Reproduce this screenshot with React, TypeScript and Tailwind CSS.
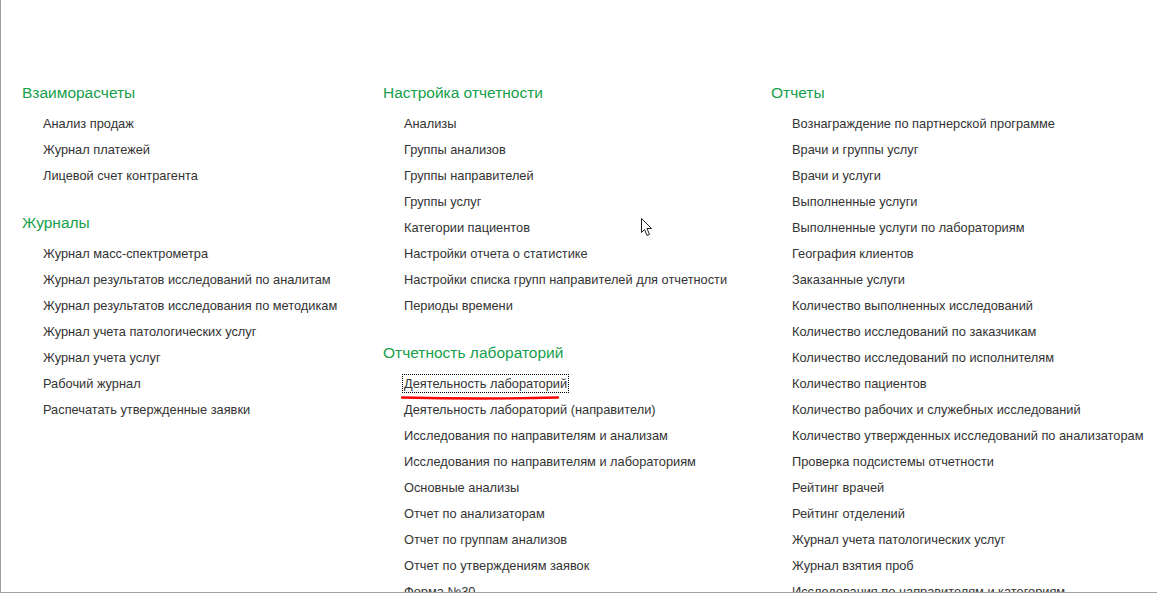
import React from "react";

type Section = { title: string; items: string[] };

const col1: Section[] = [
  { title: "Взаиморасчеты", items: ["Анализ продаж", "Журнал платежей", "Лицевой счет контрагента"] },
  {
    title: "Журналы",
    items: [
      "Журнал масс-спектрометра",
      "Журнал результатов исследований по аналитам",
      "Журнал результатов исследования по методикам",
      "Журнал учета патологических услуг",
      "Журнал учета услуг",
      "Рабочий журнал",
      "Распечатать утвержденные заявки",
    ],
  },
];

const col2: Section[] = [
  {
    title: "Настройка отчетности",
    items: [
      "Анализы",
      "Группы анализов",
      "Группы направителей",
      "Группы услуг",
      "Категории пациентов",
      "Настройки отчета о статистике",
      "Настройки списка групп направителей для отчетности",
      "Периоды времени",
    ],
  },
  {
    title: "Отчетность лабораторий",
    items: [
      "Деятельность лабораторий",
      "Деятельность лабораторий (направители)",
      "Исследования по направителям и анализам",
      "Исследования по направителям и лабораториям",
      "Основные анализы",
      "Отчет по анализаторам",
      "Отчет по группам анализов",
      "Отчет по утверждениям заявок",
      "Форма №30",
    ],
  },
];

const col3: Section[] = [
  {
    title: "Отчеты",
    items: [
      "Вознаграждение по партнерской программе",
      "Врачи и группы услуг",
      "Врачи и услуги",
      "Выполненные услуги",
      "Выполненные услуги по лабораториям",
      "География клиентов",
      "Заказанные услуги",
      "Количество выполненных исследований",
      "Количество исследований по заказчикам",
      "Количество исследований по исполнителям",
      "Количество пациентов",
      "Количество рабочих и служебных исследований",
      "Количество утвержденных исследований по анализаторам",
      "Проверка подсистемы отчетности",
      "Рейтинг врачей",
      "Рейтинг отделений",
      "Журнал учета патологических услуг",
      "Журнал взятия проб",
      "Исследования по направителям и категориям",
    ],
  },
];

function Column({ sections }: { sections: Section[] }) {
  return (
    <div className="flex flex-col gap-[24px]">
      {sections.map((s) => (
        <div key={s.title} className="flex flex-col">
          <div className="h-[20px] leading-[20px] text-[15.5px] text-[#16a04c] mb-[8px] whitespace-nowrap">{s.title}</div>
          <div className="flex flex-col pl-[21px]">
            {s.items.map((it) => (
              <div key={it} className="h-[26px] leading-[26px] text-[12.8px] text-[#333333] whitespace-nowrap">
                {it === "Деятельность лабораторий" && s.title === "Отчетность лабораторий" ? (
                  <span className="relative -ml-[2px] px-[1px] border border-dotted border-black leading-[17px] inline-block">
                    {it}
                    <svg className="absolute left-[-2px] top-[20px]" width="160" height="6" viewBox="0 0 160 6">
                      <path d="M1 2.5 C 40 3.5, 100 4, 157 2.5" stroke="#ff0000" strokeWidth="2.4" fill="none" strokeLinecap="round" />
                    </svg>
                  </span>
                ) : (
                  it
                )}
              </div>
            ))}
          </div>
        </div>
      ))}
    </div>
  );
}

export default function App() {
  return (
    <div
      className="relative w-[1157px] h-[593px] overflow-hidden bg-white border-l border-b border-[#a0a0a0]"
      style={{ fontFamily: '"Liberation Sans", Arial, sans-serif' }}
    >
      <div className="grid grid-cols-[361px_388px_1fr] pl-[21px] pt-[83px]">
        <Column sections={col1} />
        <Column sections={col2} />
        <Column sections={col3} />
      </div>
      <svg className="absolute left-[639px] top-[217px]" width="14" height="20" viewBox="0 0 14 20">
        <path d="M1.5 1.5 L1.5 15.5 L4.5 12.5 L7 18.5 L9.5 17.5 L7 11.5 L11.5 11.5 Z" fill="#ffffff" stroke="#222" strokeWidth="1" strokeLinejoin="miter" />
      </svg>
    </div>
  );
}
